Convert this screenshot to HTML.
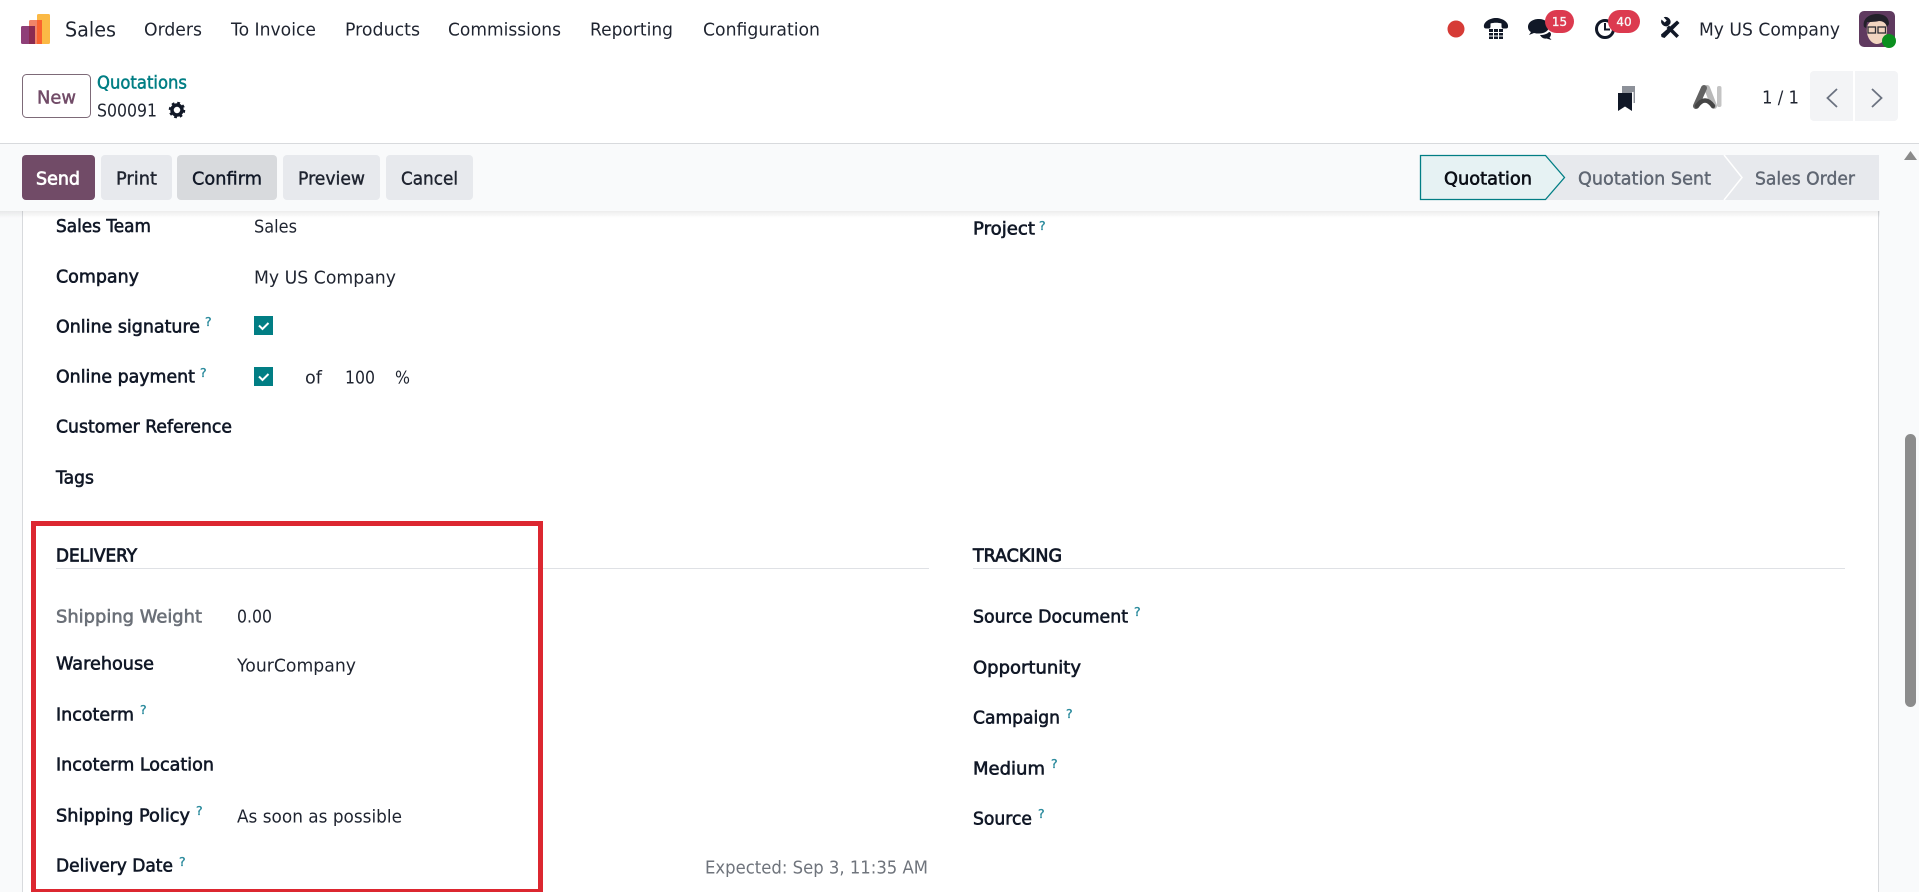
<!DOCTYPE html>
<html><head><meta charset="utf-8"><title>S00091</title>
<style>
html,body{margin:0;padding:0;background:#fff;width:1919px;height:892px;overflow:hidden}
svg{display:block}
text{font-family:"DejaVu Sans","Liberation Sans",sans-serif;font-size:17.6px;fill:#1f2430;white-space:pre}
.b{fill:#111827;stroke:#111827;stroke-width:.6px}
.m{stroke:#1f2430;stroke-width:.4px}
.q{font-size:12.5px;fill:#2a8a9c;stroke:#2a8a9c;stroke-width:.3px}
.g{fill:#5f6672}
</style></head><body>
<svg width="1919" height="892" viewBox="0 0 1919 892" xmlns="http://www.w3.org/2000/svg">
<defs>
<linearGradient id="sh" x1="0" y1="0" x2="0" y2="1"><stop offset="0" stop-color="#000" stop-opacity=".07"/><stop offset="1" stop-color="#000" stop-opacity="0"/></linearGradient>
</defs>
<rect width="1919" height="892" fill="#fff"/>
<!-- background -->
<rect x="0" y="144" width="1919" height="748" fill="#f9fafb"/>
<rect x="22" y="211" width="1857" height="681" fill="#fff"/>
<rect x="22" y="211" width="1" height="681" fill="#d8dadd"/>
<rect x="1878" y="211" width="1" height="681" fill="#d8dadd"/>
<rect x="0" y="143" width="1919" height="1" fill="#d8dadd"/>
<rect x="0" y="211" width="1880" height="7" fill="url(#sh)"/>
<!-- scrollbar -->
<path d="M1904 160l6.500-9 6.500 9z" fill="#8a8a8a"/>
<rect x="1905" y="434" width="11" height="273" rx="5.500" fill="#8c8c8c"/>

<!-- logo -->
<rect x="37" y="14" width="13" height="30" rx="1.500" fill="#fbb945"/>
<rect x="29" y="20" width="13" height="24" rx="1.500" fill="#f08468"/>
<rect x="37" y="20" width="5" height="24" fill="#f9622f"/>
<rect x="21" y="26" width="14" height="18" rx="1.500" fill="#8f3f78"/>
<rect x="29" y="26" width="6" height="18" fill="#8b2a50"/>
<text x="65" y="36.500" style="font-size:20.500px" textLength="51" lengthAdjust="spacingAndGlyphs">Sales</text>
<text x="144" y="35.500" textLength="58" lengthAdjust="spacingAndGlyphs">Orders</text>
<text x="231" y="35.500" textLength="85" lengthAdjust="spacingAndGlyphs">To Invoice</text>
<text x="345" y="35.500" textLength="75" lengthAdjust="spacingAndGlyphs">Products</text>
<text x="448" y="35.500" textLength="113" lengthAdjust="spacingAndGlyphs">Commissions</text>
<text x="590" y="35.500" textLength="83" lengthAdjust="spacingAndGlyphs">Reporting</text>
<text x="703" y="35.500" textLength="117" lengthAdjust="spacingAndGlyphs">Configuration</text>

<!-- systray -->
<circle cx="1456" cy="29" r="8.500" fill="#d63b36"/>
<path d="M1484 27c-1-5 6-9 12-9s13 4 12 9c0 1-1 1.500-2 1.500h-3c-1 0-1.500-1-1.500-2v-3c-3-1-8-1-11 0v3c0 1-.5 2-1.500 2H1486c-1 0-2-.5-2-1.500z" fill="#111827"/>
<rect x="1489" y="29" width="14" height="10" fill="#111827"/>
<path d="M1489 32.500h14M1489 36h14M1493.500 29v10M1498.500 29v10" fill="none" stroke="#fff" stroke-width="1"/>
<path d="M1539 19c-6 0-11 3-11 8 0 2 1 4 3 5l-2 3 5-2c2 .5 3 .5 5 .5 6 0 10-3 10-7s-4-7.500-10-7.500z" fill="#111827"/>
<path d="M1540 35c4 0 7-1 9-3 1 0 2 1 2 2 0 1.500-.5 2.500-1.500 3.500l2 2.500-5-1.500c-3 .5-5-1-6.500-3.500z" fill="#111827"/>
<rect x="1545" y="10" width="29" height="23" rx="11.500" fill="#dc3a4f"/>
<text x="1559.500" y="26" text-anchor="middle" style="font-size:12px;fill:#f8f8f8;stroke:#f8f8f8;stroke-width:.3px">15</text>
<circle cx="1605" cy="29" r="8.500" fill="none" stroke="#111827" stroke-width="3"/>
<path d="M1605 23v6.500h5" fill="none" stroke="#111827" stroke-width="2"/>
<rect x="1608" y="10" width="32" height="23" rx="11.500" fill="#dc3a4f"/>
<text x="1624" y="26" text-anchor="middle" style="font-size:12px;fill:#f8f8f8;stroke:#f8f8f8;stroke-width:.3px">40</text>
<!-- tools -->
<path d="M1677 20.500l2.500 2.500-15 15-3-1-.5-2.500z" fill="#111827"/>
<path d="M1679 35.500l-2.500 2.500-10-10 2.500-2.500z" fill="#111827"/>
<path d="M1668 26a5 5 0 0 1-6.500-6.500l3.200 3 2-2-3-3.200a5 5 0 0 1 6.500 6.500z" fill="#111827"/>
<text x="1699" y="35.500" textLength="141" lengthAdjust="spacingAndGlyphs">My US Company</text>
<!-- avatar -->
<rect x="1859" y="11" width="36" height="36" rx="5" fill="#5f3a5f"/>
<path d="M1867 33c-1-9 3-13 10-13s10 3 10 10c0 7-4 14-10 14-5 0-9-5-10-11z" fill="#f1d5c0"/>
<path d="M1864 27c-2-8 5-13 13-13 7 0 12 3 12 10l-2 3c-1-4-4-6-8-6-4 1-10 1-12 1l-1 6z" fill="#23212a"/>
<g fill="none" stroke="#2d2d33" stroke-width="1.300"><rect x="1868" y="27" width="7.500" height="6"/><rect x="1878" y="27" width="7.500" height="6"/></g>
<circle cx="1889" cy="41" r="7" fill="#0b8f1f"/>

<!-- breadcrumb -->
<rect x="22.500" y="74.500" width="68" height="43" rx="4" fill="#fff" stroke="#7d6a78"/>
<text x="37" y="103.500" style="fill:#714b67;stroke:#714b67;stroke-width:.45px" textLength="39" lengthAdjust="spacingAndGlyphs">New</text>
<text x="97" y="88.500" style="fill:#017e84;stroke:#017e84;stroke-width:.5px" textLength="90" lengthAdjust="spacingAndGlyphs">Quotations</text>
<text x="97" y="116.500" textLength="60" lengthAdjust="spacingAndGlyphs">S00091</text>
<circle cx="177" cy="110" r="5" fill="none" stroke="#111827" stroke-width="3.500"/>
<circle cx="177" cy="110" r="7" fill="none" stroke="#111827" stroke-width="2.500" stroke-dasharray="2.700 2.800"/>

<!-- right of control panel -->
<rect x="1622" y="86" width="13" height="17" fill="#8d9199"/>
<path d="M1618 93h14v18l-7-4.500-7 4.500z" fill="#111827"/>
<path d="M1632.800 92v11.500" stroke="#fff" stroke-width="1.500"/>
<path d="M1707 88l7 18" stroke="#b8b8b8" stroke-width="6" stroke-linecap="round" fill="none"/>
<path d="M1704 88l-8 18" stroke="#626262" stroke-width="6" stroke-linecap="round" fill="none"/>
<path d="M1697 106q8-11 16 0" stroke="#454545" stroke-width="4.500" stroke-linecap="round" fill="none"/>
<rect x="1717" y="86" width="4.500" height="21" rx="2" fill="#c4c4c4"/>
<text x="1762" y="103.500" textLength="37" lengthAdjust="spacingAndGlyphs">1 / 1</text>
<path d="M1810 75a4 4 0 0 1 4-4h39v50h-39a4 4 0 0 1-4-4z" fill="#f3f4f6"/>
<path d="M1855 71h39a4 4 0 0 1 4 4v42a4 4 0 0 1-4 4h-39z" fill="#f3f4f6"/>
<path d="M1837 89l-9.500 9 9.500 9" fill="none" stroke="#6b7280" stroke-width="1.800"/>
<path d="M1872 89l9.500 9-9.500 9" fill="none" stroke="#6b7280" stroke-width="1.800"/>

<!-- action buttons -->
<rect x="22" y="155" width="73" height="45" rx="4" fill="#714b67"/>
<text x="36" y="184.500" style="fill:#fff;stroke:#fff;stroke-width:.7px" textLength="44" lengthAdjust="spacingAndGlyphs">Send</text>
<rect x="101" y="155" width="71" height="45" rx="4" fill="#e7e9ed"/>
<text x="116" y="184.500" class="m" textLength="41" lengthAdjust="spacingAndGlyphs">Print</text>
<rect x="177" y="155" width="100" height="45" rx="4" fill="#d8dadd"/>
<text x="192" y="184.500" class="m" style="fill:#111827;stroke:#111827" textLength="70" lengthAdjust="spacingAndGlyphs">Confirm</text>
<rect x="283" y="155" width="97" height="45" rx="4" fill="#e7e9ed"/>
<text x="298" y="184.500" class="m" textLength="67" lengthAdjust="spacingAndGlyphs">Preview</text>
<rect x="386" y="155" width="87" height="45" rx="4" fill="#e7e9ed"/>
<text x="401" y="184.500" class="m" textLength="57" lengthAdjust="spacingAndGlyphs">Cancel</text>

<!-- statusbar -->
<rect x="1546" y="155" width="333" height="45" fill="#e7e9ed"/>
<path d="M1724 155l18 22.500-18 22.500" fill="none" stroke="#fff" stroke-width="1.500"/>
<path d="M1420.500 155.500h125l19 22-19 22h-125z" fill="#e6f2f3" stroke="#017e84" stroke-width="1.300"/>
<text x="1444" y="184.500" style="fill:#0b0f16;stroke:#0b0f16;stroke-width:.6px" textLength="88" lengthAdjust="spacingAndGlyphs">Quotation</text>
<text x="1578" y="184.500" class="m" style="fill:#5f6672;stroke:#5f6672" textLength="133" lengthAdjust="spacingAndGlyphs">Quotation Sent</text>
<text x="1755" y="184.500" class="m" style="fill:#5f6672;stroke:#5f6672" textLength="100" lengthAdjust="spacingAndGlyphs">Sales Order</text>

<!-- left column -->
<text x="56" y="232" class="b" textLength="95" lengthAdjust="spacingAndGlyphs">Sales Team</text>
<text x="254" y="232.500" textLength="43" lengthAdjust="spacingAndGlyphs">Sales</text>
<text x="56" y="282.500" class="b" textLength="83" lengthAdjust="spacingAndGlyphs">Company</text>
<text x="254" y="283.500" textLength="142" lengthAdjust="spacingAndGlyphs">My US Company</text>
<text x="56" y="332.500" class="b" textLength="144" lengthAdjust="spacingAndGlyphs">Online signature</text>
<text x="205" y="326" class="q">?</text>
<rect x="254" y="316" width="19" height="19" fill="#017e84"/>
<path d="M259 325.500l3.500 3.500 6-6" fill="none" stroke="#fff" stroke-width="2"/>
<text x="56" y="382.500" class="b" textLength="139" lengthAdjust="spacingAndGlyphs">Online payment</text>
<text x="200" y="377" class="q">?</text>
<rect x="254" y="367" width="19" height="19" fill="#017e84"/>
<path d="M259 376.500l3.500 3.500 6-6" fill="none" stroke="#fff" stroke-width="2"/>
<text x="305" y="383.500" textLength="17" lengthAdjust="spacingAndGlyphs">of</text>
<text x="345" y="383.500" textLength="30" lengthAdjust="spacingAndGlyphs">100</text>
<text x="395" y="383.500" textLength="15" lengthAdjust="spacingAndGlyphs">%</text>
<text x="56" y="432.500" class="b" textLength="176" lengthAdjust="spacingAndGlyphs">Customer Reference</text>
<text x="56" y="483.500" class="b" textLength="38" lengthAdjust="spacingAndGlyphs">Tags</text>

<!-- right column top -->
<text x="973" y="234.500" class="b" textLength="62" lengthAdjust="spacingAndGlyphs">Project</text>
<text x="1039" y="230" class="q">?</text>

<!-- delivery -->
<text x="56" y="561.500" class="b" style="stroke-width:.8px" textLength="81" lengthAdjust="spacingAndGlyphs">DELIVERY</text>
<rect x="56" y="568" width="873" height="1" fill="#dfe1e5"/>
<text x="56" y="622.500" class="b" style="fill:#6b7078;stroke:#6b7078" textLength="146" lengthAdjust="spacingAndGlyphs">Shipping Weight</text>
<text x="237" y="622.500" textLength="35" lengthAdjust="spacingAndGlyphs">0.00</text>
<text x="56" y="669.500" class="b" textLength="98" lengthAdjust="spacingAndGlyphs">Warehouse</text>
<text x="237" y="671.500" textLength="119" lengthAdjust="spacingAndGlyphs">YourCompany</text>
<text x="56" y="720.500" class="b" textLength="78" lengthAdjust="spacingAndGlyphs">Incoterm</text>
<text x="140" y="714" class="q">?</text>
<text x="56" y="770.500" class="b" textLength="158" lengthAdjust="spacingAndGlyphs">Incoterm Location</text>
<text x="56" y="821.500" class="b" textLength="134" lengthAdjust="spacingAndGlyphs">Shipping Policy</text>
<text x="196" y="815" class="q">?</text>
<text x="237" y="822.500" textLength="165" lengthAdjust="spacingAndGlyphs">As soon as possible</text>
<text x="56" y="871.500" class="b" textLength="117" lengthAdjust="spacingAndGlyphs">Delivery Date</text>
<text x="179" y="866" class="q">?</text>
<text x="705" y="873.500" class="g" style="fill:#6f747c" textLength="223" lengthAdjust="spacingAndGlyphs">Expected: Sep 3, 11:35 AM</text>

<!-- tracking -->
<text x="973" y="561.500" class="b" style="stroke-width:.8px" textLength="89" lengthAdjust="spacingAndGlyphs">TRACKING</text>
<rect x="973" y="568" width="872" height="1" fill="#dfe1e5"/>
<text x="973" y="622.500" class="b" textLength="155" lengthAdjust="spacingAndGlyphs">Source Document</text>
<text x="1134" y="616" class="q">?</text>
<text x="973" y="673.500" class="b" textLength="108" lengthAdjust="spacingAndGlyphs">Opportunity</text>
<text x="973" y="723.500" class="b" textLength="87" lengthAdjust="spacingAndGlyphs">Campaign</text>
<text x="1066" y="718" class="q">?</text>
<text x="973" y="774.500" class="b" textLength="72" lengthAdjust="spacingAndGlyphs">Medium</text>
<text x="1051" y="768" class="q">?</text>
<text x="973" y="824.500" class="b" textLength="59" lengthAdjust="spacingAndGlyphs">Source</text>
<text x="1038" y="818" class="q">?</text>

<!-- red annotation box -->
<g fill="#dc2730">
<rect x="31" y="521" width="512" height="5"/>
<rect x="31" y="889" width="512" height="3"/>
<rect x="31" y="521" width="5" height="371"/>
<rect x="538" y="521" width="5" height="371"/>
</g>
</svg>
</body></html>
